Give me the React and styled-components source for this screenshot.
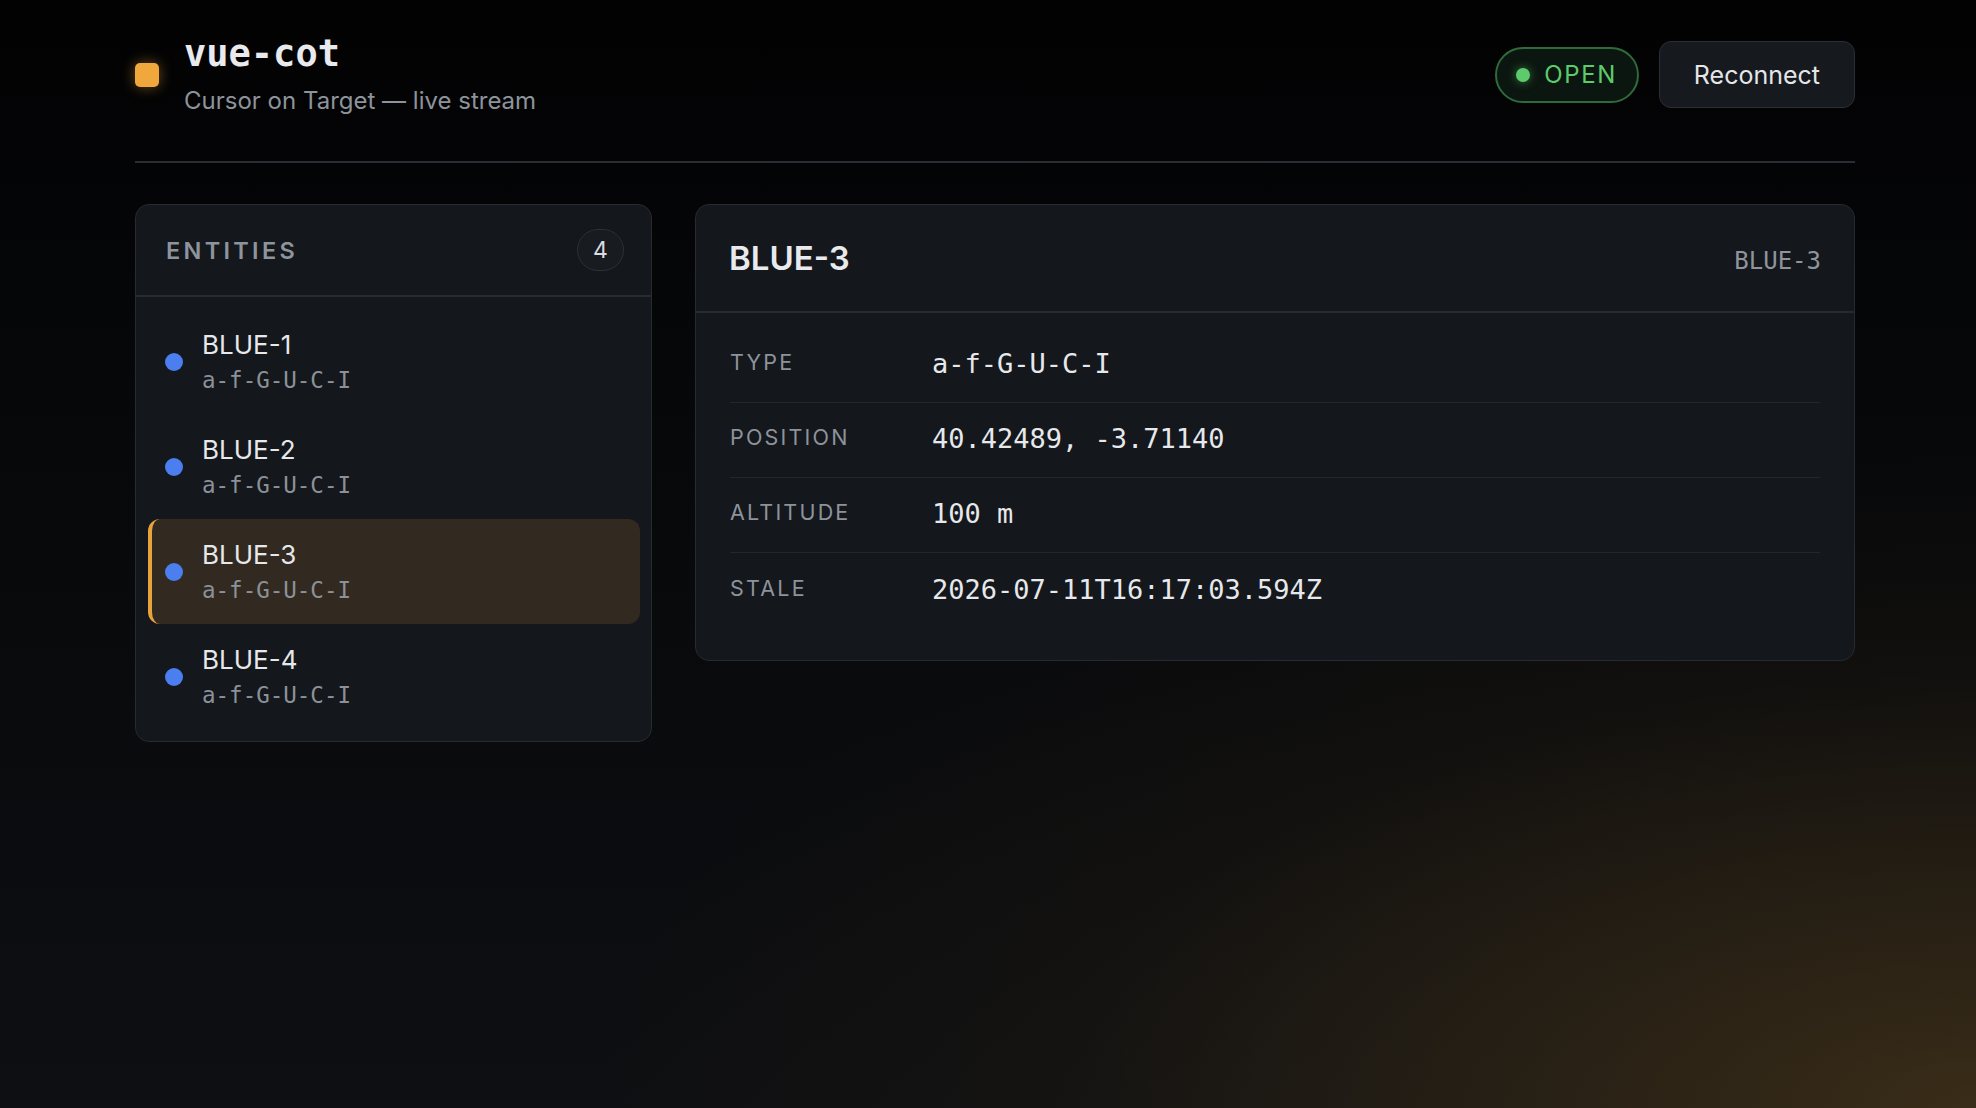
import React, { useState } from "react";
import styled, { createGlobalStyle } from "styled-components";

const sans = `"Inter", "Liberation Sans", sans-serif`;
const mono = `"DejaVu Sans Mono", "Liberation Mono", monospace`;

const GlobalStyle = createGlobalStyle`
  html, body {
    margin: 0;
    padding: 0;
  }
  body {
    background: #040506;
    color: #e6e8eb;
    font-family: ${sans};
  }
  * {
    box-sizing: border-box;
  }
`;

const Page = styled.div`
  min-height: 100vh;
  background:
    radial-gradient(ellipse 85% 72% at 100% 100%, rgba(110, 80, 32, 0.45), rgba(60, 45, 20, 0.15) 55%, transparent 82%),
    linear-gradient(180deg, #020203 0%, #07080a 40%, #0e0f12 100%);
  padding: 32px 121px 0 135px;
`;

const Header = styled.header`
  display: flex;
  align-items: center;
  justify-content: space-between;
  padding-bottom: 44px;
  border-bottom: 2px solid #2a2d33;
`;

const Brand = styled.div`
  display: flex;
  align-items: center;
  gap: 25px;
`;

const BrandMark = styled.span`
  width: 24px;
  height: 24px;
  border-radius: 5px;
  background: #f0a83c;
  box-shadow: 0 0 14px rgba(240, 168, 60, 0.45);
  flex-shrink: 0;
`;

const BrandText = styled.div`
  display: flex;
  flex-direction: column;
  gap: 9px;
`;

const Title = styled.h1`
  margin: 0;
  font-family: ${mono};
  font-weight: 700;
  font-size: 37px;
  line-height: 44px;
  color: #e8eaed;
`;

const Subtitle = styled.p`
  margin: 0;
  font-size: 24px;
  line-height: 32px;
  color: #8d939b;
`;

const Actions = styled.div`
  display: flex;
  align-items: center;
  gap: 20px;
`;

const Status = styled.div`
  display: flex;
  align-items: center;
  gap: 14px;
  height: 56px;
  padding: 0 20px 0 19px;
  border-radius: 28px;
  border: 2px solid ${({ $open }) => ($open ? "#2f6b3a" : "#6b2f2f")};
  background: ${({ $open }) => ($open ? "#0c1610" : "#160c0c")};
  color: ${({ $open }) => ($open ? "#5ccb6c" : "#d65c5c")};
  font-size: 24px;
  letter-spacing: 1.6px;
`;

const StatusDot = styled.span`
  width: 14px;
  height: 14px;
  border-radius: 50%;
  background: currentColor;
  box-shadow: 0 0 10px rgba(92, 203, 108, 0.55);
`;

const Button = styled.button`
  height: 67px;
  padding: 0 34px;
  border-radius: 12px;
  border: 1.5px solid #2a2e35;
  background: #16191e;
  color: #e4e6e9;
  font-family: ${sans};
  font-size: 25px;
  cursor: pointer;
`;

const Main = styled.main`
  display: grid;
  grid-template-columns: 517px 1fr;
  gap: 43px;
  align-items: start;
  margin-top: 41px;
`;

const Panel = styled.section`
  background: #14171c;
  border: 1.5px solid #262a31;
  border-radius: 14px;
  overflow: hidden;
`;

const PanelHeader = styled.div`
  display: flex;
  align-items: center;
  justify-content: space-between;
  height: ${({ $tall }) => ($tall ? "108px" : "92px")};
  padding: 0 ${({ $tall }) => ($tall ? "33px" : "27px 0 30px")};
  border-bottom: 2px solid #262a31;
`;

const SectionLabel = styled.h2`
  margin: 0;
  font-size: 23.5px;
  font-weight: 600;
  letter-spacing: 3.3px;
  color: #8e949c;
`;

const CountBadge = styled.span`
  min-width: 47px;
  height: 42px;
  padding: 0 14px;
  display: flex;
  align-items: center;
  justify-content: center;
  border-radius: 21px;
  border: 1.5px solid #2c3037;
  background: #181b20;
  font-size: 23px;
  color: #d9dce0;
`;

const List = styled.ul`
  list-style: none;
  margin: 0;
  padding: 12px 11px 12px 12px;
  display: flex;
  flex-direction: column;
`;

const Item = styled.li`
  display: flex;
  align-items: center;
  gap: 19px;
  height: 105px;
  padding: 0 16px 0 13px;
  border-left: 4px solid ${({ $active }) => ($active ? "#e8a33c" : "transparent")};
  border-radius: 12px;
  background: ${({ $active }) => ($active ? "#322a20" : "transparent")};
  cursor: pointer;
`;

const Dot = styled.span`
  width: 18px;
  height: 18px;
  border-radius: 50%;
  background: ${({ $color }) => $color};
  flex-shrink: 0;
`;

const ItemText = styled.div`
  display: flex;
  flex-direction: column;
  gap: 4px;
`;

const ItemName = styled.span`
  font-size: 26px;
  line-height: 33px;
  color: #e6e8eb;
`;

const ItemType = styled.span`
  font-family: ${mono};
  font-size: 22.5px;
  line-height: 30px;
  color: #8c9199;
`;

const DetailTitle = styled.h2`
  margin: 0;
  font-size: 33px;
  font-weight: 600;
  color: #e8eaed;
`;

const DetailUid = styled.span`
  font-family: ${mono};
  font-size: 24px;
  color: #8f949c;
  padding-top: 6px;
`;

const Fields = styled.dl`
  margin: 0;
  padding: 15px 34px 32px;
`;

const Field = styled.div`
  display: grid;
  grid-template-columns: 202px 1fr;
  align-items: center;
  height: 75px;
  padding-bottom: 3px;
  border-bottom: ${({ $last }) => ($last ? "none" : "1.5px solid #23272d")};
`;

const FieldLabel = styled.dt`
  font-size: 21.5px;
  letter-spacing: 2.2px;
  color: #8d939b;
  margin-top: -3px;
`;

const FieldValue = styled.dd`
  margin: 0;
  font-family: ${mono};
  font-size: 27px;
  color: #e6e8eb;
`;

const entities = [
  { uid: "BLUE-1", type: "a-f-G-U-C-I", lat: 40.41702, lon: -3.70379, hae: 100, stale: "2026-07-11T16:17:03.512Z" },
  { uid: "BLUE-2", type: "a-f-G-U-C-I", lat: 40.42011, lon: -3.70812, hae: 100, stale: "2026-07-11T16:17:03.551Z" },
  { uid: "BLUE-3", type: "a-f-G-U-C-I", lat: 40.42489, lon: -3.7114, hae: 100, stale: "2026-07-11T16:17:03.594Z" },
  { uid: "BLUE-4", type: "a-f-G-U-C-I", lat: 40.42833, lon: -3.71522, hae: 100, stale: "2026-07-11T16:17:03.630Z" },
];

// friendly units are blue, hostile red, everything else yellow
const affiliationColor = (type) => {
  if (type.startsWith("a-f")) return "#4b7ff0";
  if (type.startsWith("a-h")) return "#e5534b";
  return "#e3b341";
};

function App() {
  const [selected, setSelected] = useState("BLUE-3");
  const current = entities.find((e) => e.uid === selected);

  const fields = [
    ["TYPE", current.type],
    ["POSITION", `${current.lat.toFixed(5)}, ${current.lon.toFixed(5)}`],
    ["ALTITUDE", `${current.hae} m`],
    ["STALE", current.stale],
  ];

  return (
    <Page>
      <GlobalStyle />
      <Header>
        <Brand>
          <BrandMark />
          <BrandText>
            <Title>vue-cot</Title>
            <Subtitle>Cursor on Target — live stream</Subtitle>
          </BrandText>
        </Brand>
        <Actions>
          <Status $open>
            <StatusDot />
            OPEN
          </Status>
          <Button>Reconnect</Button>
        </Actions>
      </Header>

      <Main>
        <Panel>
          <PanelHeader>
            <SectionLabel>ENTITIES</SectionLabel>
            <CountBadge>{entities.length}</CountBadge>
          </PanelHeader>
          <List>
            {entities.map((e) => (
              <Item key={e.uid} $active={e.uid === selected} onClick={() => setSelected(e.uid)}>
                <Dot $color={affiliationColor(e.type)} />
                <ItemText>
                  <ItemName>{e.uid}</ItemName>
                  <ItemType>{e.type}</ItemType>
                </ItemText>
              </Item>
            ))}
          </List>
        </Panel>

        <Panel>
          <PanelHeader $tall>
            <DetailTitle>{current.uid}</DetailTitle>
            <DetailUid>{current.uid}</DetailUid>
          </PanelHeader>
          <Fields>
            {fields.map(([label, value], i) => (
              <Field key={label} $last={i === fields.length - 1}>
                <FieldLabel>{label}</FieldLabel>
                <FieldValue>{value}</FieldValue>
              </Field>
            ))}
          </Fields>
        </Panel>
      </Main>
    </Page>
  );
}

export default App;
